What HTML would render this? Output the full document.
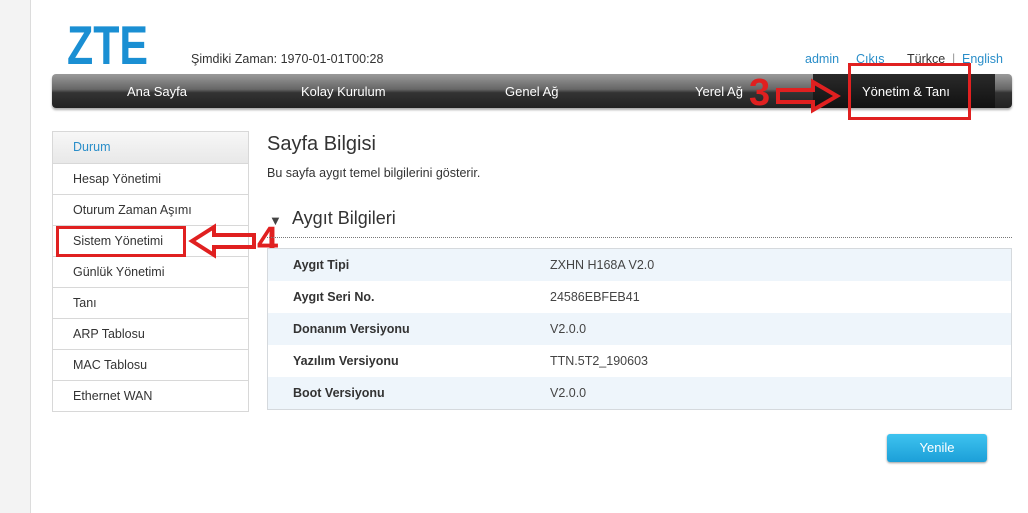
<!DOCTYPE html>
<html><head><meta charset="utf-8"><style>
*{margin:0;padding:0;box-sizing:border-box}
body{width:1028px;height:513px;background:#fff;font-family:"Liberation Sans",sans-serif;position:relative;overflow:hidden;color:#333}
.abs{position:absolute}
.strip{left:0;top:0;width:31px;height:513px;background:#f3f3f3;border-right:1px solid #dcdcdc}
.logo{left:67px;top:14px;font-size:55px;font-weight:bold;color:#1a8fd3;transform:scaleX(0.78);transform-origin:left;line-height:1.15}
.time{left:191px;top:52px;font-size:12.5px;color:#333}
.links{top:52px;font-size:12.5px}
.nav{left:52px;top:74px;width:960px;height:34px;border-radius:4px;background:linear-gradient(#9a9a9a 0%,#666 45%,#333 55%,#222 100%);box-shadow:0 2px 2px #aaa}
.sel{left:813px;top:74px;width:182px;height:34px;background:linear-gradient(#2a2a2a,#111)}
.nav-t{top:84px;color:#fff;font-size:13px}
.side{left:52px;top:131px;width:197px;border:1px solid #d8d8d8}
.side div{height:31px;line-height:31px;padding-left:20px;font-size:12.5px;border-top:1px solid #d8d8d8;color:#333}
.side div:first-child{border-top:none;background:linear-gradient(#f7f7f7,#e8e8e8);color:#2a8ec9}
.tbl{left:267px;top:248px;width:745px;border:1px solid #d5d9dd}
.tbl .r{height:32px;line-height:32px;font-size:12.5px;position:relative}
.tbl .r:nth-child(odd){background:#eef5fb}
.tbl b{position:absolute;left:25px;color:#333}
.tbl span{position:absolute;left:282px;color:#444}
.btn{left:887px;top:434px;width:100px;height:28px;border-radius:3px;background:linear-gradient(#3ec3ef,#1c9fd8);color:#fff;font-size:13px;text-align:center;line-height:28px;box-shadow:0 1px 2px #999}
.red{color:#e02020;font-weight:bold}
</style></head><body>
<div class="abs strip"></div>
<div class="abs logo">ZTE</div>
<div class="abs time">Şimdiki Zaman: 1970-01-01T00:28</div>
<div class="abs links" style="left:805px;color:#2a8ec9">admin</div>
<div class="abs links" style="left:856px;color:#2a8ec9">Çıkış</div>
<div class="abs links" style="left:907px;color:#333">Türkçe</div>
<div class="abs links" style="left:952px;color:#999">|</div>
<div class="abs links" style="left:962px;color:#2a8ec9">English</div>
<div class="abs nav"></div>
<div class="abs sel"></div>
<div class="abs nav-t" style="left:127px">Ana Sayfa</div>
<div class="abs nav-t" style="left:301px">Kolay Kurulum</div>
<div class="abs nav-t" style="left:505px">Genel Ağ</div>
<div class="abs nav-t" style="left:695px">Yerel Ağ</div>
<div class="abs nav-t" style="left:862px">Yönetim &amp; Tanı</div>
<div class="abs red" style="left:749px;top:72px;font-size:38px">3</div>
<svg class="abs" style="left:775px;top:78px" width="66" height="36"><path d="M3 12 H38 V4 L62 18 L38 32 V24 H3 Z" fill="none" stroke="#e02020" stroke-width="4"/></svg>
<div class="abs" style="left:848px;top:63px;width:123px;height:57px;border:3px solid #e02020"></div>
<div class="abs side">
<div>Durum</div><div>Hesap Yönetimi</div><div>Oturum Zaman Aşımı</div><div>Sistem Yönetimi</div><div>Günlük Yönetimi</div><div>Tanı</div><div>ARP Tablosu</div><div>MAC Tablosu</div><div>Ethernet WAN</div>
</div>
<div class="abs" style="left:56px;top:226px;width:130px;height:31px;border:3px solid #e02020"></div>
<svg class="abs" style="left:188px;top:223px" width="70" height="36"><path d="M4 18 L26 4 V12 H66 V24 H26 V32 Z" fill="none" stroke="#e02020" stroke-width="4"/></svg>
<div class="abs red" style="left:257px;top:220px;font-size:38px">4</div>
<div class="abs" style="left:267px;top:133px;font-size:20px;color:#333">Sayfa Bilgisi</div>
<div class="abs" style="left:267px;top:166px;font-size:12.5px;color:#333">Bu sayfa aygıt temel bilgilerini gösterir.</div>
<div class="abs" style="left:269px;top:213px;font-size:13px;color:#444">▼</div>
<div class="abs" style="left:292px;top:208px;font-size:18px;color:#333">Aygıt Bilgileri</div>
<div class="abs" style="left:267px;top:237px;width:745px;border-top:1px dotted #777"></div>
<div class="abs tbl">
<div class="r"><b>Aygıt Tipi</b><span>ZXHN H168A V2.0</span></div>
<div class="r"><b>Aygıt Seri No.</b><span>24586EBFEB41</span></div>
<div class="r"><b>Donanım Versiyonu</b><span>V2.0.0</span></div>
<div class="r"><b>Yazılım Versiyonu</b><span>TTN.5T2_190603</span></div>
<div class="r"><b>Boot Versiyonu</b><span>V2.0.0</span></div>
</div>
<div class="abs btn">Yenile</div>
</body></html>
